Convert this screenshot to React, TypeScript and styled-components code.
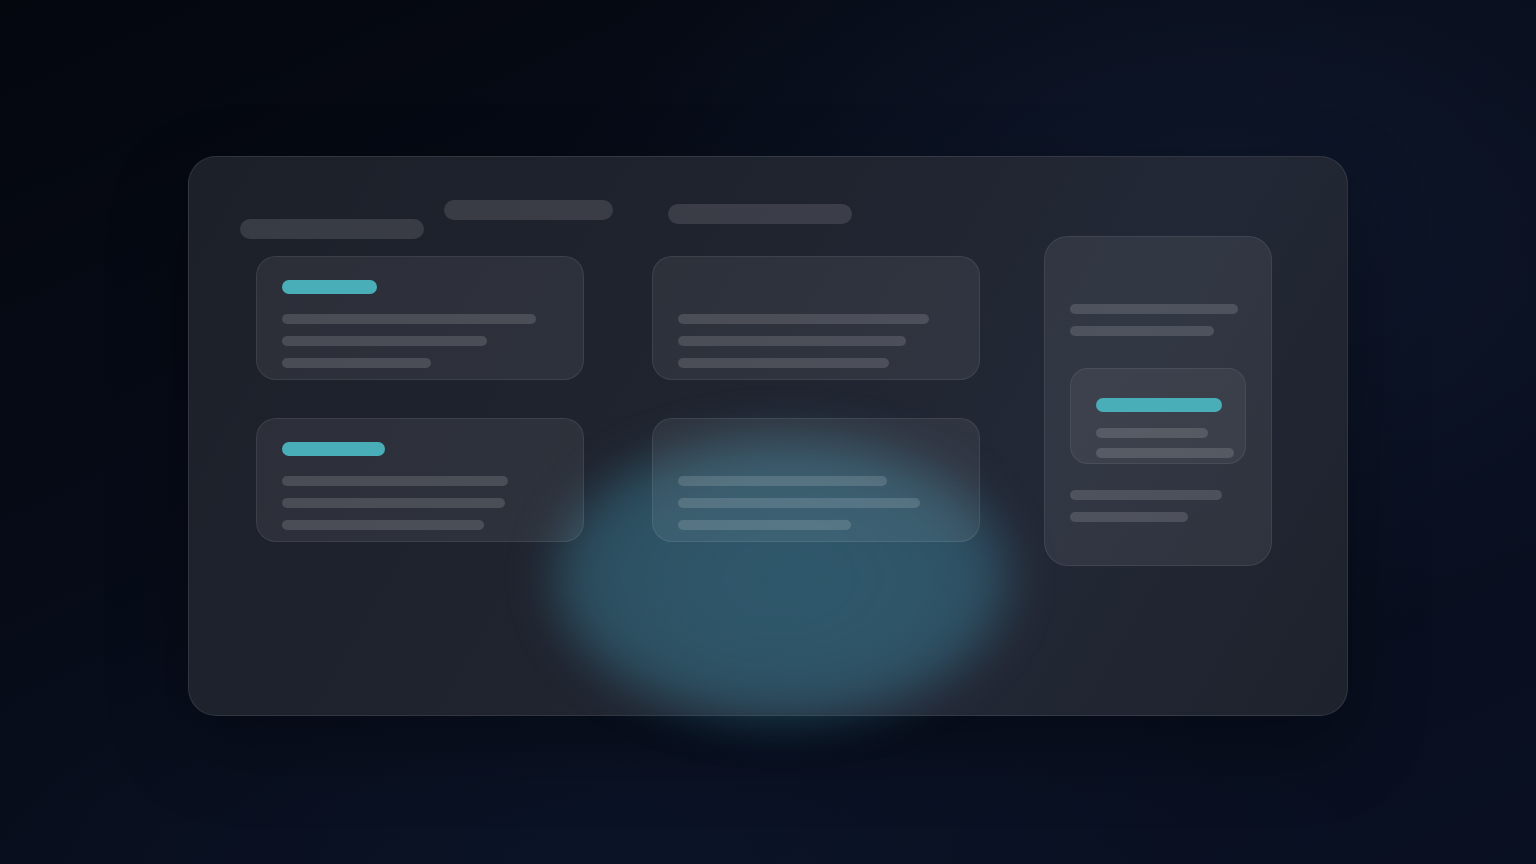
import React from "react";
import styled, { createGlobalStyle } from "styled-components";

const GlobalStyle = createGlobalStyle`
  html, body {
    margin: 0;
    padding: 0;
    height: 100%;
  }
  body {
    font-family: "Inter", "Liberation Sans", sans-serif;
    background: #060a14;
  }
`;

const Page = styled.div`
  min-height: 100vh;
  box-sizing: border-box;
  padding-top: 156px;
  display: flex;
  justify-content: center;
  align-items: flex-start;
  background:
    radial-gradient(ellipse 60% 70% at 78% 25%, rgba(22, 34, 60, 0.5) 0%, transparent 70%),
    radial-gradient(ellipse 70% 50% at 40% 100%, rgba(14, 26, 50, 0.45) 0%, transparent 70%),
    linear-gradient(155deg, #04070e 0%, #070c19 45%, #091022 100%);
`;

const Panel = styled.section`
  position: relative;
  width: 1160px;
  height: 560px;
  box-sizing: border-box;
  border-radius: 28px;
  border: 1px solid rgba(255, 255, 255, 0.09);
  background: linear-gradient(120deg, #1c2029 0%, #20242f 45%, #232836 70%, #1e222c 100%);
  box-shadow: 0 30px 80px rgba(0, 0, 0, 0.3);
  padding: 43px 75px 0 51px;
  display: flex;
  gap: 64px;
`;

const Glow = styled.div`
  position: absolute;
  left: 362px;
  top: 276px;
  width: 460px;
  height: 290px;
  border-radius: 50%;
  background: radial-gradient(
    ellipse at 50% 50%,
    rgba(62, 140, 166, 0.5) 0%,
    rgba(62, 140, 166, 0.44) 55%,
    rgba(62, 140, 166, 0) 100%
  );
  filter: blur(22px);
  z-index: 0;
  pointer-events: none;
`;

const Main = styled.div`
  position: relative;
  z-index: 1;
  display: flex;
  flex-direction: column;
  gap: 17px;
`;

const HeaderRow = styled.div`
  display: flex;
  align-items: flex-start;
  height: 39px;
`;

const HeaderBar = styled.div<{ $w: number; $top: number; $left: number }>`
  width: ${(p) => p.$w}px;
  height: 20px;
  margin-top: ${(p) => p.$top}px;
  margin-left: ${(p) => p.$left}px;
  border-radius: 10px;
  background: rgba(255, 255, 255, 0.12);
`;

const CardGrid = styled.div`
  margin-left: 16px;
  display: grid;
  grid-template-columns: 328px 328px;
  grid-auto-rows: 124px;
  column-gap: 68px;
  row-gap: 38px;
`;

const Card = styled.div`
  box-sizing: border-box;
  border-radius: 20px;
  border: 1px solid rgba(255, 255, 255, 0.08);
  background: rgba(255, 255, 255, 0.065);
  padding: 23px 25px 11px;
  display: flex;
  flex-direction: column;
`;

const Accent = styled.div<{ $w: number; $hidden?: boolean }>`
  flex-shrink: 0;
  width: ${(p) => p.$w}px;
  height: 14px;
  border-radius: 7px;
  background: ${(p) => (p.$hidden ? "transparent" : "#49aeb8")};
  margin-bottom: 20px;
`;

const Lines = styled.div`
  display: flex;
  flex-direction: column;
  gap: 12px;
`;

const Line = styled.div<{ $w: number }>`
  flex-shrink: 0;
  width: ${(p) => p.$w}px;
  height: 10px;
  border-radius: 5px;
  background: rgba(255, 255, 255, 0.14);
`;

const Sidebar = styled.aside`
  position: relative;
  z-index: 1;
  margin-top: 36px;
  width: 228px;
  height: 330px;
  box-sizing: border-box;
  border-radius: 24px;
  border: 1px solid rgba(255, 255, 255, 0.08);
  background: rgba(255, 255, 255, 0.07);
  padding: 67px 25px 0;
  display: flex;
  flex-direction: column;
`;

const InnerCard = styled.div`
  flex-shrink: 0;
  margin: 32px 0 26px;
  width: 176px;
  height: 96px;
  box-sizing: border-box;
  border-radius: 18px;
  border: 1px solid rgba(255, 255, 255, 0.07);
  background: rgba(255, 255, 255, 0.05);
  padding: 29px 25px 0;
  display: flex;
  flex-direction: column;
`;

const InnerAccent = styled(Accent)`
  margin-bottom: 16px;
`;

const InnerLines = styled(Lines)`
  gap: 10px;
`;

const cards = [
  { accent: 95, lines: [254, 205, 149] },
  { accent: 0, lines: [251, 228, 211] },
  { accent: 103, lines: [226, 223, 202] },
  { accent: 0, lines: [209, 242, 173] },
];

export default function App() {
  return (
    <>
      <GlobalStyle />
      <Page>
        <Panel>
          <Glow />
          <Main>
            <HeaderRow>
              <HeaderBar $w={184} $top={19} $left={0} />
              <HeaderBar $w={169} $top={0} $left={20} />
              <HeaderBar $w={184} $top={4} $left={55} />
            </HeaderRow>
            <CardGrid>
              {cards.map((c, i) => (
                <Card key={i}>
                  <Accent $w={c.accent || 90} $hidden={!c.accent} />
                  <Lines>
                    {c.lines.map((w, j) => (
                      <Line key={j} $w={w} />
                    ))}
                  </Lines>
                </Card>
              ))}
            </CardGrid>
          </Main>
          <Sidebar>
            <Lines>
              <Line $w={168} />
              <Line $w={144} />
            </Lines>
            <InnerCard>
              <InnerAccent $w={126} />
              <InnerLines>
                <Line $w={112} />
                <Line $w={138} />
              </InnerLines>
            </InnerCard>
            <Lines>
              <Line $w={152} />
              <Line $w={118} />
            </Lines>
          </Sidebar>
        </Panel>
      </Page>
    </>
  );
}
